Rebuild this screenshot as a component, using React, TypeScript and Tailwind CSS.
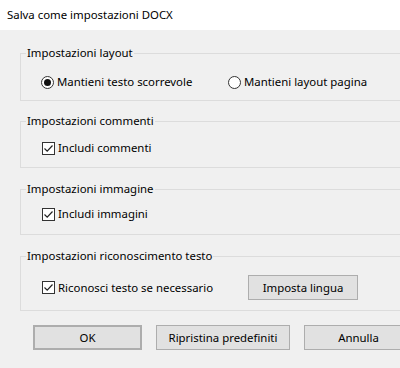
import type { ReactNode } from 'react';

const font = { fontFamily: '"Noto Sans", "Segoe UI", sans-serif' };

function Radio({ checked, label }: { checked?: boolean; label: string }) {
  return (
    <label className="flex items-center h-[16px]">
      <span className="w-[13px] h-[13px] rounded-full border border-[#333] bg-white flex items-center justify-center shrink-0">
        {checked && <span className="w-[7px] h-[7px] rounded-full bg-[#111]" />}
      </span>
      <span className="ml-[3px]">{label}</span>
    </label>
  );
}

function Check({ label }: { label: string }) {
  return (
    <label className="flex items-center h-[16px]">
      <span className="w-[13px] h-[13px] border border-[#333] bg-white shrink-0 flex items-center justify-center">
        <svg width="11" height="11" viewBox="0 0 11 11">
          <path d="M1.5 5.5 L4.2 8.2 L9.5 2.5" fill="none" stroke="#222" strokeWidth="1.2" />
        </svg>
      </span>
      <span className="ml-[3px]">{label}</span>
    </label>
  );
}

function Group({ title, className, children }: { title: string; className: string; children: ReactNode }) {
  return (
    <div className={`relative border border-[#dcdcdc] mr-[-30px] ${className}`}>
      {/* legend sits over the top border */}
      <span className="absolute top-[-9px] left-[5px] px-[1px] bg-[#f0f0f0] leading-[16px]">{title}</span>
      {children}
    </div>
  );
}

function Button({ children, className = '' }: { children: ReactNode; className?: string }) {
  return (
    <button className={`h-[25px] bg-[#e1e1e1] border border-[#adadad] text-[11.4px] text-black flex items-center justify-center shrink-0 ${className}`}>
      {children}
    </button>
  );
}

export default function App() {
  return (
    <div className="w-[400px] h-[368px] overflow-hidden bg-[#f0f0f0] text-[11.4px] text-black" style={font}>
      <div className="h-[30px] bg-white flex items-center pl-[7px]">Salva come impostazioni DOCX</div>

      <div className="pl-[20px]">
        <Group title="Impostazioni layout" className="mt-[23px] h-[48px] pt-[20px] pl-[20px]">
          <div className="flex">
            <div className="w-[187px]">
              <Radio checked label="Mantieni testo scorrevole" />
            </div>
            <Radio label="Mantieni layout pagina" />
          </div>
        </Group>

        <Group title="Impostazioni commenti" className="mt-[20px] h-[47px] pt-[18px] pl-[21px]">
          <Check label="Includi commenti" />
        </Group>

        <Group title="Impostazioni immagine" className="mt-[21px] h-[46px] pt-[16px] pl-[21px]">
          <Check label="Includi immagini" />
        </Group>

        <Group title="Impostazioni riconoscimento testo" className="mt-[21px] h-[55px] pt-[18px] pl-[21px]">
          <div className="flex items-center h-[25px]">
            <div className="w-[206px]">
              <Check label="Riconosci testo se necessario" />
            </div>
            <Button className="w-[110px]">Imposta lingua</Button>
          </div>
        </Group>
      </div>

      <div className="flex gap-[14px] pl-[33px] mt-[14px]">
        <Button className="w-[109px] border-2 border-[#0078d7]">OK</Button>
        <Button className="w-[134px]">Ripristina predefiniti</Button>
        <Button className="w-[109px]">Annulla</Button>
      </div>
    </div>
  );
}
